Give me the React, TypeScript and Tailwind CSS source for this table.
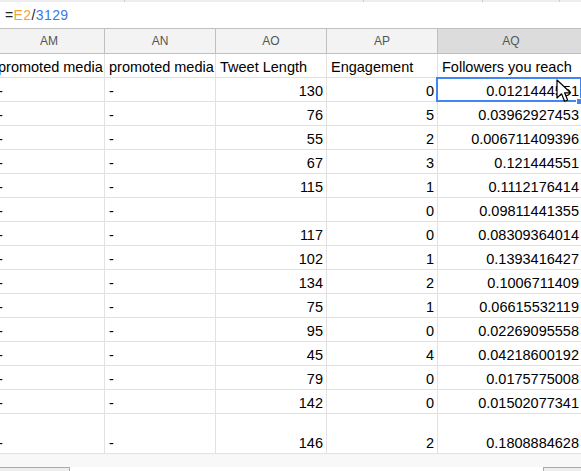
import React from "react";

const rows: [string, string, string, string, string][] = [
  ["-", "-", "130", "0", "0.0121444551"],
  ["-", "-", "76", "5", "0.03962927453"],
  ["-", "-", "55", "2", "0.006711409396"],
  ["-", "-", "67", "3", "0.121444551"],
  ["-", "-", "115", "1", "0.1112176414"],
  ["-", "-", "", "0", "0.09811441355"],
  ["-", "-", "117", "0", "0.08309364014"],
  ["-", "-", "102", "1", "0.1393416427"],
  ["-", "-", "134", "2", "0.1006711409"],
  ["-", "-", "75", "1", "0.06615532119"],
  ["-", "-", "95", "0", "0.02269095558"],
  ["-", "-", "45", "4", "0.04218600192"],
  ["-", "-", "79", "0", "0.0175775008"],
  ["-", "-", "142", "0", "0.01502077341"],
  ["-", "-", "146", "2", "0.1808884628"],
];

function DataRow({ r, tall, selected }: { r: string[]; tall?: boolean; selected?: boolean }) {
  const h = tall ? "h-[40px]" : "h-[24px]";
  return (
    <div className={`flex ${h} border-b border-[#e2e2e2] relative`}>
      <div className="w-[111px] shrink-0 border-r border-[#e2e2e2] flex items-end pl-[4px] pb-[1px] leading-[17px]">{r[0]}</div>
      <div className="w-[111px] shrink-0 border-r border-[#e2e2e2] flex items-end pl-[4px] pb-[1px] leading-[17px]">{r[1]}</div>
      <div className="w-[111px] shrink-0 border-r border-[#e2e2e2] flex items-end justify-end pr-[3px] pb-[1px] leading-[17px]">{r[2]}</div>
      <div className="w-[111px] shrink-0 border-r border-[#e2e2e2] flex items-end justify-end pr-[3px] pb-[1px] leading-[17px]">{r[3]}</div>
      <div className="w-[147px] shrink-0 border-r border-[#e2e2e2] flex items-end justify-end pr-[5px] pb-[1px] leading-[17px] relative">
        {r[4]}
        {selected && (
          <>
            <div className="absolute left-[-2px] top-[-1px] w-[146px] h-[25px] border-2 border-[#4285f4]" />
            <div className="absolute left-[138px] top-[20px] w-[7px] h-[7px] bg-[#4285f4] border border-white" />
          </>
        )}
      </div>
    </div>
  );
}

export default function App() {
  return (
    <div className="w-[581px] h-[471px] overflow-hidden bg-white relative font-['Liberation_Sans',Arial,sans-serif] text-black">
      {/* top toolbar remnant */}
      <div className="h-[2px] bg-[#eeeeee] flex">
        <div className="w-[125px] border-r border-[#cccccc]" />
        <div className="w-[239px] border-r border-[#cccccc]" />
        <div className="w-[119px] border-r border-[#cccccc]" />
        <div className="w-[77px] border-r border-[#cccccc]" />
      </div>
      {/* formula bar */}
      <div className="h-[27px] border-b border-[#c0c0c0] flex items-center pl-[5px] text-[14px] tracking-[0.4px]">
        <span className="text-[#222]">=</span>
        <span className="text-[#f4a33a]">E2</span>
        <span className="text-[#222]">/</span>
        <span className="text-[#3b78e7]">3129</span>
      </div>
      {/* grid */}
      <div className="overflow-hidden">
        <div className="ml-[-6px] w-[600px]">
          <div className="flex h-[25px] border-b border-[#c0c0c0] bg-[#f3f3f3] text-[12px] text-[#555]">
            {["AM", "AN", "AO", "AP"].map((c) => (
              <div key={c} className="w-[111px] shrink-0 border-r border-[#c0c0c0] flex items-center justify-center">
                {c}
              </div>
            ))}
            <div className="w-[147px] shrink-0 border-r border-[#c0c0c0] flex items-center justify-center bg-[#dcdcdc]">AQ</div>
          </div>
          <div className="text-[14.5px]">
            <div className="flex h-[24px] border-b border-[#e2e2e2]">
              {["promoted media", "promoted media", "Tweet Length", "Engagement"].map((t, i) => (
                <div key={i} className="w-[111px] shrink-0 border-r border-[#e2e2e2] flex items-end pl-[4px] pb-[1px] leading-[17px] whitespace-nowrap overflow-hidden">
                  {t}
                </div>
              ))}
              <div className="w-[147px] shrink-0 border-r border-[#e2e2e2] flex items-end pl-[4px] pb-[1px] leading-[17px] whitespace-nowrap">
                Followers you reach
              </div>
            </div>
            {rows.map((r, i) => (
              <DataRow key={i} r={r} tall={i === rows.length - 1} selected={i === 0} />
            ))}
          </div>
        </div>
      </div>
      {/* bottom gray area */}
      <div className="h-[13px] bg-[#f8f8f8]" />
      <div className="flex h-[10px]">
        <div className="w-[70px] bg-[#eeeeee] border-t border-r border-[#aaaaaa]" />
        <div className="flex-1 bg-white" />
        <div className="w-[38px] bg-[#eeeeee] border-t border-l border-[#aaaaaa]" />
      </div>
      {/* mouse cursor */}
      <svg className="absolute left-[556px] top-[79px]" width="18" height="26" viewBox="0 0 18 26">
        <path
          d="M1 1 L1 19 L5.5 14.8 L8.6 22.2 L11.6 21 L8.6 13.8 L14.6 13.8 Z"
          fill="white"
          stroke="black"
          strokeWidth="1.2"
          strokeLinejoin="round"
        />
      </svg>
    </div>
  );
}
